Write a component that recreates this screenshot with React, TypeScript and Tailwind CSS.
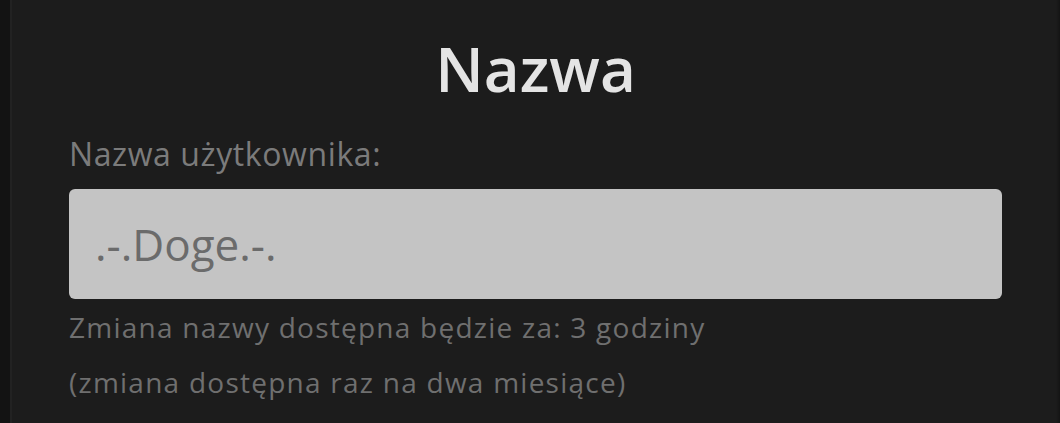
const App = () => {
  return (
    <div
      className="flex h-[423px] w-[1060px] overflow-hidden bg-[#1c1c1c]"
      style={{ fontFamily: '"Open Sans", "Noto Sans", sans-serif' }}
    >
      <div className="w-[10px] shrink-0 bg-[#131313]" />
      <div className="w-[2px] shrink-0 bg-[#222222]" />
      <div className="flex flex-1 flex-col pl-[57px] pr-[54px]">
        <h1 className="mt-[37px] text-center text-[62px] font-semibold leading-none text-[#e4e4e4]">
          Nazwa
        </h1>
        <label className="mt-[39px] text-[32px] leading-none tracking-[0.6px] text-[#7b7b7b]">
          Nazwa użytkownika:
        </label>
        <div className="mt-[19px] flex h-[110px] items-center rounded-[6px] bg-[#c4c4c4] pl-[26px]">
          <span className="text-[44px] leading-none text-[#6b6b6b]">.-.Doge.-.</span>
        </div>
        <div className="mt-[1px] flex flex-col text-[28px] leading-[55px] tracking-[1.25px] text-[#6f6f6f]">
          <span>Zmiana nazwy dostępna będzie za: 3 godziny</span>
          <span>(zmiana dostępna raz na dwa miesiące)</span>
        </div>
      </div>
      <div className="w-[4px] shrink-0 bg-gradient-to-r from-[#1c1c1c] to-[#141414]" />
    </div>
  );
};

export default App;
